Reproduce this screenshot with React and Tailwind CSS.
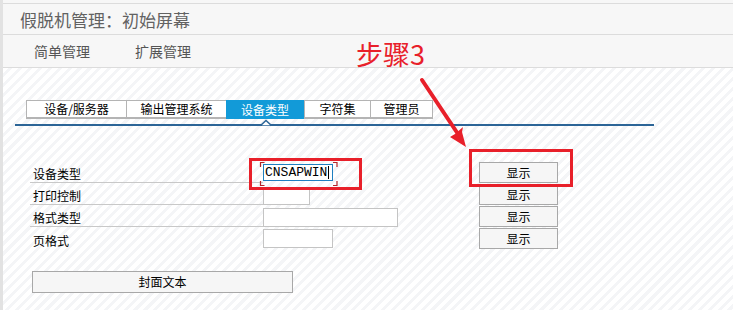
import React from 'react'

const TABS = [
  { label: '设备/服务器', w: 'w-[100px]' },
  { label: '输出管理系统', w: 'w-[100px]' },
  { label: '设备类型', w: 'w-[78px]', active: true },
  { label: '字符集', w: 'w-[66px]' },
  { label: '管理员', w: 'w-[63px]' }
]

const ROWS = [
  { label: '设备类型', input: 'w-[70px] h-[17px] mb-[2px]', value: 'CNSAPWIN', focus: true, line: true },
  { label: '打印控制', input: 'w-[47px] h-[18px]', line: true },
  { label: '格式类型', input: 'w-[135px] h-[19px]', line: true },
  { label: '页格式', input: 'w-[70px] h-[19px] mb-[1px]' }
]

function Button({ children, className = '' }) {
  return (
    <div className={`flex items-center justify-center border border-[#a8a8a8] bg-[#f6f6f6] text-[12px] leading-none text-black ${className}`}>
      {children}
    </div>
  )
}

export default function App() {
  return (
    <div className="relative flex h-[310px] w-[733px] overflow-hidden bg-white font-['Noto_Sans_CJK_SC',sans-serif]">
      <div className="w-[3px] shrink-0 bg-[#e2e2e2]" />

      <div className="flex flex-1 flex-col">
        <div className="h-[4px] shrink-0 border-b border-[#dcdcdc] bg-[#f7f7f7]" />
        <div className="flex h-[31px] shrink-0 items-center border-b border-[#dcdcdc] bg-[#f7f7f7] pl-[17px] text-[17px] leading-none text-[#626262]">
          假脱机管理：初始屏幕
        </div>
        <div className="flex h-[33px] shrink-0 items-center gap-[45px] border-b border-[#dcdcdc] bg-[#f7f7f7] pl-[31px] text-[14px] leading-none text-[#555]">
          <span>简单管理</span>
          <span>扩展管理</span>
        </div>

        <div className="flex-1 bg-[repeating-linear-gradient(135deg,#ffffff_0px,#ffffff_4px,#f4f5f7_4px,#f4f5f7_7px)]">
          <div className="ml-[12px] mt-[32px] w-[639px]">
            <div className="flex pl-[11px]">
              {TABS.map(t =>
                t.active ? (
                  <div key={t.label} className={`relative flex h-[19px] items-center justify-center bg-[#129ad8] text-[12px] leading-none text-white ${t.w}`}>
                    {t.label}
                    <svg className="absolute -bottom-[7px] left-[34px]" width="12" height="7" viewBox="0 0 12 7">
                      <polygon points="0,7 6,1.5 12,7" fill="#ffffff" stroke="#2c6597" strokeWidth="1.5" />
                    </svg>
                  </div>
                ) : (
                  <div key={t.label} className={`flex h-[19px] items-center justify-center border-b-2 border-l border-t border-[#b4b4b4] bg-white text-[12px] leading-none text-black last:border-r ${t.w}`}>
                    {t.label}
                  </div>
                )
              )}
            </div>
            <div className="mt-[5px] h-[2px] bg-[#2c6597]" />
          </div>

          <div className="ml-[27px] mt-[36px] flex flex-col gap-[1px]">
            {ROWS.map(r => (
              <div key={r.label} className="flex h-[21px]">
                <div className={`flex h-full w-[233px] items-end pb-[2px] pl-[3px] text-[12px] leading-none text-black ${r.line ? 'border-b border-[#c8c8c8]' : ''}`}>
                  {r.label}
                </div>
                <div className="flex w-[216px] items-end">
                  {r.focus ? (
                    <div className={`flex items-center border border-[#1e7fc0] bg-white pl-[1px] font-['Liberation_Mono',monospace] text-[13px] leading-none text-black ${r.input}`}>
                      <span className="border-r border-black pr-[1px]">{r.value}</span>
                    </div>
                  ) : (
                    <div className={`border border-[#c4c4c4] bg-white ${r.input}`} />
                  )}
                </div>
                <Button className="h-[21px] w-[79px]">显示</Button>
              </div>
            ))}
          </div>

          <Button className="ml-[29px] mt-[22px] h-[22px] w-[261px]">封面文本</Button>
        </div>
      </div>

      <div className="pointer-events-none absolute left-[249px] top-[158px] h-[32px] w-[113px] border-[3px] border-[#e8202a]" />
      <div className="pointer-events-none absolute left-[469px] top-[149px] h-[38px] w-[104px] border-[3px] border-[#e8202a]" />
      <div className="pointer-events-none absolute left-[356px] top-[40px] text-[27px] leading-none text-[#e8202a]">步骤3</div>

      <svg className="pointer-events-none absolute left-0 top-0" width="733" height="310" viewBox="0 0 733 310">
        <g stroke="#b3262a" strokeWidth="1.2" fill="none">
          <polyline points="264.5,162.5 260.5,162.5 260.5,167" />
          <polyline points="333,162.5 337,162.5 337,167" />
          <polyline points="260.5,181 260.5,185.5 264.5,185.5" />
          <polyline points="337,181 337,185.5 333,185.5" />
        </g>
        <line x1="422" y1="80" x2="458" y2="134" stroke="#e8202a" strokeWidth="4" strokeLinecap="round" />
        <polygon points="466,147 450,137 455,134 463,127 462,132" fill="#e8202a" />
      </svg>
    </div>
  )
}
